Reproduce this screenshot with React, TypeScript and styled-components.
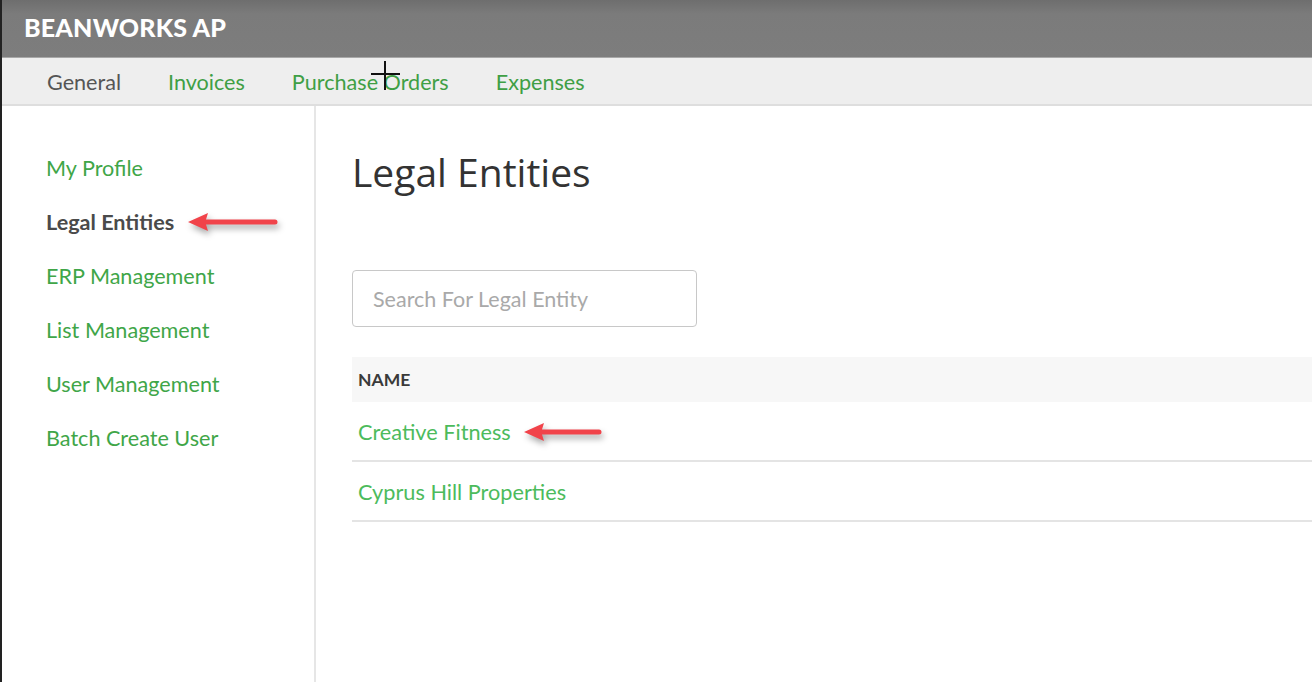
import styled, { createGlobalStyle } from "styled-components";

const GlobalStyle = createGlobalStyle`
  html, body { margin: 0; padding: 0; background: #fff; }
  body { font-family: Lato, "Open Sans", sans-serif; }
  * { box-sizing: border-box; }
`;

const Page = styled.div`
  position: relative;
  width: 1312px;
  height: 682px;
  overflow: hidden;
  border-left: 2px solid #222;
  display: flex;
  flex-direction: column;
`;

const TopBar = styled.header`
  height: 58px;
  flex: none;
  background: linear-gradient(#6e6e6e, #7b7b7b 14px, #7d7d7d);
  border-bottom: 1px solid #a8a8a8;
  display: flex;
  align-items: center;
  padding-left: 22px;
`;

const Brand = styled.div`
  color: #fff;
  font-family: Lato, sans-serif;
  font-weight: 900;
  font-size: 25px;
  letter-spacing: 0.2px;
  margin-top: -3px;
`;

const NavBar = styled.nav`
  height: 48px;
  flex: none;
  background: #eeeeee;
  border-bottom: 2px solid #dedede;
  display: flex;
  align-items: center;
  padding: 2px 0 0 45px;
  gap: 47px;
`;

const NavItem = styled.span<{ $active?: boolean }>`
  font-size: 21.6px;
  color: ${(p) => (p.$active ? "#555" : "#3f9f45")};
`;

const Body = styled.div`
  flex: 1;
  display: flex;
`;

const Sidebar = styled.aside`
  width: 314px;
  flex: none;
  border-right: 2px solid #e6e6e6;
  padding: 49px 0 0 44px;
  display: flex;
  flex-direction: column;
  gap: 28px;
`;

const SideItem = styled.div<{ $active?: boolean }>`
  position: relative;
  font-size: 21.6px;
  line-height: 26px;
  font-weight: ${(p) => (p.$active ? 700 : 400)};
  color: ${(p) => (p.$active ? "#4a4a4a" : "#3fa648")};
`;

const Main = styled.main`
  flex: 1;
  padding: 0 0 0 36px;
  display: flex;
  flex-direction: column;
`;

const Title = styled.h1`
  margin: 44px 0 0;
  font-family: "Open Sans", "Noto Sans", sans-serif;
  font-weight: 400;
  font-size: 39px;
  line-height: 44px;
  color: #333;
`;

const Search = styled.input`
  margin-top: 76px;
  width: 345px;
  height: 57px;
  border: 1px solid #c8c8c8;
  border-radius: 4px;
  padding: 0 20px;
  font-family: Lato, sans-serif;
  font-size: 21.5px;
  color: #333;
  outline: none;
  &::placeholder { color: #a9a9a9; }
`;

const Table = styled.div`
  margin-top: 30px;
  display: flex;
  flex-direction: column;
`;

const HeadRow = styled.div`
  height: 45px;
  background: #f7f7f7;
  display: flex;
  align-items: center;
  padding-left: 6px;
  font-size: 17.5px;
  font-weight: 700;
  color: #3a3a3a;
`;

const Row = styled.div`
  position: relative;
  height: 60px;
  border-bottom: 2px solid #e4e4e4;
  display: flex;
  align-items: center;
  padding-left: 6px;
`;

const EntityLink = styled.span`
  position: relative;
  font-size: 21.7px;
  color: #4cbb5c;
  margin-top: 1px;
`;

const ArrowWrap = styled.svg<{ $left: number }>`
  position: absolute;
  top: 50%;
  left: ${(p) => p.$left}px;
  transform: translateY(-50%);
  overflow: visible;
  filter: drop-shadow(2px 4px 3px rgba(0, 0, 0, 0.35));
`;

const Cursor = styled.div`
  position: absolute;
  left: 369px;
  top: 61px;
  width: 29px;
  height: 29px;
  pointer-events: none;
  &::before, &::after {
    content: "";
    position: absolute;
    background: #111;
  }
  &::before { left: 13px; top: 0; width: 2px; height: 29px; }
  &::after { top: 12px; left: 0; height: 2px; width: 29px; }
`;

const Arrow = ({ left, width }: { left: number; width: number }) => (
  <ArrowWrap $left={left} width={width} height={22} viewBox={`0 0 ${width} 22`}>
    <path d={`M0 11 L20 2 L18 8.5 L${width - 3} 8.5 A2.5 2.5 0 0 1 ${width - 3} 13.5 L18 13.5 L20 20 Z`} fill="#f1434a" />
  </ArrowWrap>
);

const sideItems = ["My Profile", "Legal Entities", "ERP Management", "List Management", "User Management", "Batch Create User"];

export default function App() {
  return (
    <>
      <GlobalStyle />
      <Page>
        <TopBar>
          <Brand>BEANWORKS AP</Brand>
        </TopBar>
        <NavBar>
          <NavItem $active>General</NavItem>
          <NavItem>Invoices</NavItem>
          <NavItem>Purchase Orders</NavItem>
          <NavItem>Expenses</NavItem>
        </NavBar>
        <Body>
          <Sidebar>
            {sideItems.map((s) => (
              <SideItem key={s} $active={s === "Legal Entities"}>
                {s}
                {s === "Legal Entities" && <Arrow left={142} width={90} />}
              </SideItem>
            ))}
          </Sidebar>
          <Main>
            <Title>Legal Entities</Title>
            <Search placeholder="Search For Legal Entity" />
            <Table>
              <HeadRow>NAME</HeadRow>
              <Row>
                <EntityLink>
                  Creative Fitness
                  <Arrow left={166} width={78} />
                </EntityLink>
              </Row>
              <Row>
                <EntityLink>Cyprus Hill Properties</EntityLink>
              </Row>
            </Table>
          </Main>
        </Body>
        <Cursor />
      </Page>
    </>
  );
}
